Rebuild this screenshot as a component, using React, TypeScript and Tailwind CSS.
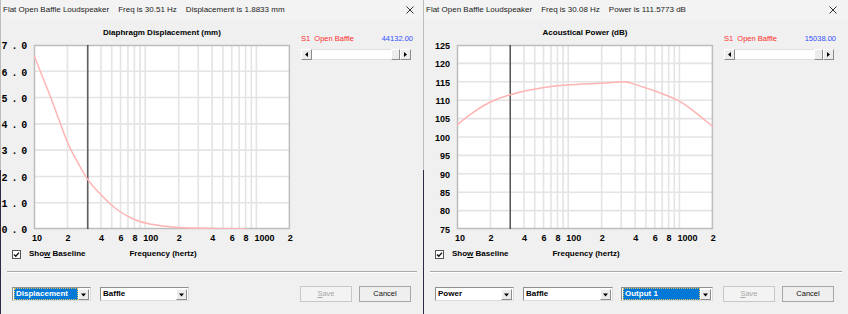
import React from "react";

const SANS = "'Liberation Sans', Arial, sans-serif";

function xf(f: number) {
  return 33 + 111.2 * Math.log10(f / 10);
}

function smoothPath(pts: [number, number][]) {
  let d = `M${pts[0][0].toFixed(2)},${pts[0][1].toFixed(2)}`;
  for (let i = 0; i < pts.length - 1; i++) {
    const p0 = pts[i - 1] || pts[i];
    const p1 = pts[i];
    const p2 = pts[i + 1];
    const p3 = pts[i + 2] || p2;
    const c1x = p1[0] + (p2[0] - p0[0]) / 6;
    const c1y = p1[1] + (p2[1] - p0[1]) / 6;
    const c2x = p2[0] - (p3[0] - p1[0]) / 6;
    const c2y = p2[1] - (p3[1] - p1[1]) / 6;
    d += ` C${c1x.toFixed(2)},${c1y.toFixed(2)} ${c2x.toFixed(2)},${c2y.toFixed(2)} ${p2[0].toFixed(2)},${p2[1].toFixed(2)}`;
  }
  return d;
}

const GRID_F = [20, 30, 40, 50, 60, 70, 80, 90, 100, 200, 300, 400, 500, 600, 700, 800, 900, 1000];
const X_LABELS: [number, string][] = [
  [10, "10"],
  [20, "2"],
  [40, "4"],
  [60, "6"],
  [80, "8"],
  [100, "100"],
  [200, "2"],
  [400, "4"],
  [600, "6"],
  [800, "8"],
  [1000, "1000"],
  [2000, "2"],
];

const TOP = 5;
const BOTTOM = 189;

type ChartProps = {
  yValues: number[];
  yMin: number;
  yMax: number;
  fmt: (v: number) => string;
  mono: boolean;
  curve: [number, number][];
  cursor: number;
};

function Chart({ yValues, yMin, yMax, fmt, mono, curve, cursor }: ChartProps) {
  const ym = (v: number) => BOTTOM - ((v - yMin) / (yMax - yMin)) * (BOTTOM - TOP);
  const pts: [number, number][] = curve.map(([f, v]) => [xf(f), ym(v)]);
  const left = xf(10);
  const right = xf(2000);
  const clipId = mono ? "clipA" : "clipB";
  return (
    <svg width={299} height={206} viewBox="0 0 299 206" className="block">
      <defs>
        <clipPath id={clipId}>
          <rect x={left} y={TOP} width={right - left} height={BOTTOM - TOP} />
        </clipPath>
      </defs>
      <rect x={left} y={TOP} width={right - left} height={BOTTOM - TOP} fill="#ffffff" />
      {yValues.slice(1, -1).map((v) => (
        <line key={"h" + v} x1={left} x2={right} y1={ym(v)} y2={ym(v)} stroke="#e4e4e4" strokeWidth={1.6} />
      ))}
      {GRID_F.map((f) => (
        <line key={"v" + f} x1={xf(f)} x2={xf(f)} y1={TOP} y2={BOTTOM} stroke="#e4e4e4" strokeWidth={1.6} />
      ))}
      <rect
        x={left + 0.5}
        y={TOP + 0.5}
        width={right - left - 1}
        height={BOTTOM - TOP - 1}
        fill="none"
        stroke="#bdbdbd"
        strokeWidth={1.5}
      />
      <line x1={xf(cursor)} x2={xf(cursor)} y1={TOP} y2={BOTTOM} stroke="#111111" strokeWidth={1} />
      <path d={smoothPath(pts)} fill="none" stroke="#ffb3b3" strokeWidth={1.5} clipPath={`url(#${clipId})`} />
      {yValues.map((v) =>
        mono ? (
          <text
            key={"yl" + v}
            x={0.5}
            y={ym(v) + 4.3}
            fontFamily="'Liberation Mono', 'Courier New', monospace"
            fontWeight={700}
            fontSize={10}
            letterSpacing={3.9}
            fill="#000"
          >
            {fmt(v)}
          </text>
        ) : (
          <text
            key={"yl" + v}
            x={26}
            y={ym(v) + 3.7}
            textAnchor="end"
            fontFamily={SANS}
            fontWeight={700}
            fontSize={9}
            fill="#000"
          >
            {fmt(v)}
          </text>
        )
      )}
      {X_LABELS.map(([f, s]) => (
        <text key={"xl" + f} x={xf(f) - 2} y={201.3} fontFamily={SANS} fontWeight={700} fontSize={9} fill="#000">
          {s}
        </text>
      ))}
    </svg>
  );
}

function Arrow({ dir }: { dir: "left" | "right" | "down" }) {
  return (
    <svg width={7} height={7} viewBox="0 0 7 7" className="block">
      {dir === "left" && <polygon points="2,3.5 5,1 5,6" fill="#000" />}
      {dir === "right" && <polygon points="5,3.5 2,1 2,6" fill="#000" />}
      {dir === "down" && <polygon points="1,2.5 6,2.5 3.5,5.5" fill="#000" />}
    </svg>
  );
}

function ScrollBtn({ dir }: { dir: "left" | "right" }) {
  return (
    <div className="flex h-[11px] w-[11px] items-center justify-center border border-t-white border-l-white border-r-[#8c8c8c] border-b-[#8c8c8c] bg-[#ececec]">
      <Arrow dir={dir} />
    </div>
  );
}

function SidePanel({ value }: { value: string }) {
  return (
    <div className="ml-[1px] flex w-[112px] flex-col">
      <div
        className="mt-[13px] flex h-[12px] items-center justify-between text-[7.5px] leading-[12px]"
        style={{ fontFamily: SANS }}
      >
        <span className="whitespace-pre text-[#ff2b2b]">S1  Open Baffle</span>
        <span className="text-[#3050ff]">{value}</span>
      </div>
      <div className="mt-[4px] flex h-[11px] w-[110px] bg-white">
        <ScrollBtn dir="left" />
        <div className="flex-1 border-y border-[#e0e0e0] bg-white" />
        <div className="h-[11px] w-[9px] border border-t-white border-l-white border-r-[#8c8c8c] border-b-[#8c8c8c] bg-[#ececec]" />
        <ScrollBtn dir="right" />
      </div>
    </div>
  );
}

function ComboArrow() {
  return (
    <div className="mr-[1px] ml-auto flex h-[11px] w-[11px] items-center justify-center border border-t-white border-l-white border-r-[#8c8c8c] border-b-[#8c8c8c] bg-[#ececec]">
      <Arrow dir="down" />
    </div>
  );
}

function Combo({
  text,
  selected,
  className,
  selClass,
}: {
  text: string;
  selected: boolean;
  className: string;
  selClass?: string;
}) {
  return (
    <div
      className={`flex h-[14px] items-center border border-[#8f8f8f] border-r-[#dcdcdc] border-b-[#dcdcdc] bg-white ${className}`}
      style={{ fontFamily: SANS }}
    >
      {selected ? (
        <div
          className={`ml-[1px] flex h-[12px] items-center border border-dotted border-[#d9c35a] bg-[#0078d7] pl-[1px] text-[8px] font-bold text-white ${selClass}`}
        >
          {text}
        </div>
      ) : (
        <div className="pl-[2px] text-[8px] font-bold text-black">{text}</div>
      )}
      <ComboArrow />
    </div>
  );
}

function Button({ label, disabled }: { label: string; disabled: boolean }) {
  return (
    <div
      className={`flex h-[16px] w-[52px] items-center justify-center border text-[7.5px] ${
        disabled ? "border-[#c8c8c8] bg-[#f3f3f3] text-[#a8a8a8]" : "border-[#a6a6a6] bg-[#efefef] text-[#111]"
      }`}
      style={{ fontFamily: SANS }}
    >
      {label === "Save" ? (
        <span>
          <span className="underline">S</span>ave
        </span>
      ) : (
        <span>{label}</span>
      )}
    </div>
  );
}

function Checkbox() {
  return (
    <div className="flex h-[9px] w-[9px] items-center justify-center border border-[#555] bg-white">
      <svg width={7} height={7} viewBox="0 0 7 7" className="block">
        <polyline points="1,3.5 2.8,5.3 6,1.6" fill="none" stroke="#111" strokeWidth={1.3} />
      </svg>
    </div>
  );
}

type WinProps = {
  titleParts: string[];
  chartTitle: string;
  chart: ChartProps;
  value: string;
  bottom: React.ReactNode;
  wide?: boolean;
};

function Window({ titleParts, chartTitle, chart, value, bottom, wide }: WinProps) {
  return (
    <div className="flex h-[314px] shrink-0">
      <div className="h-full w-[1px] bg-[linear-gradient(to_bottom,#bdbdbd_0px,#bdbdbd_170px,#2e2b47_170px,#2e2b47_100%)]" />
      <div className={`flex flex-col bg-[#f0f0f0] ${wide ? "w-[424px]" : "w-[422px]"}`}>
        <div
          className="flex h-[20px] items-center bg-[#f3f3f3] pl-[2px] text-[8px] text-[#1b1b1b]"
          style={{ fontFamily: SANS }}
        >
          <div className="flex gap-[9px]">
            {titleParts.map((t) => (
              <span key={t} className="whitespace-pre">
                {t}
              </span>
            ))}
          </div>
          <svg width={8} height={8} viewBox="0 0 8 8" className="ml-[auto] block" style={{ marginRight: wide ? 11 : 9 }}>
            <path d="M0.5,0.5 L7.5,7.5 M7.5,0.5 L0.5,7.5" stroke="#333" strokeWidth={1} />
          </svg>
        </div>
        <div className="flex">
          <div className="flex w-[299px] flex-col">
            <div
              className="ml-[33px] h-[20px] w-[256px] pt-[7px] text-center text-[8px] font-bold leading-[11px] text-black"
              style={{ fontFamily: SANS }}
            >
              {chartTitle}
            </div>
            <Chart {...chart} />
            <div className="flex h-[16px] items-center text-[8px] font-bold text-black" style={{ fontFamily: SANS }}>
              <div className="ml-[11px]">
                <Checkbox />
              </div>
              <span className="ml-[8px]">
                Sho<span className="underline">w</span> Baseline
              </span>
              <span className="ml-[44px]">Frequency (hertz)</span>
            </div>
          </div>
          <SidePanel value={value} />
        </div>
        <div className="mx-[6px] mt-[9px] h-[2px] border-t border-b border-t-[#a9a9a9] border-b-white" />
        <div className="mt-[13px] flex h-[16px] items-center">{bottom}</div>
      </div>
    </div>
  );
}

const dispCurve: [number, number][] = [
  [10, 6.6],
  [14, 5.05],
  [20, 3.3],
  [25, 2.5],
  [30.5, 1.88],
  [40, 1.3],
  [55, 0.76],
  [78, 0.38],
  [110, 0.19],
  [200, 0.06],
  [400, 0.02],
  [800, 0.01],
];

const powerCurve: [number, number][] = [
  [10, 103.3],
  [14, 106.7],
  [20, 109.5],
  [30, 111.5],
  [49, 113.0],
  [97, 114.1],
  [195, 114.6],
  [315, 115.0],
  [360, 114.7],
  [480, 113.5],
  [630, 112.3],
  [950, 110.1],
  [1250, 107.8],
  [2000, 102.8],
];

export default function App() {
  return (
    <div className="flex h-[314px] w-[848px] overflow-hidden bg-[#2e2b47]">
      <Window
        titleParts={["Flat Open Baffle Loudspeaker", "Freq is 30.51 Hz", "Displacement is 1.8833 mm"]}
        chartTitle="Diaphragm Displacement (mm)"
        value="44132.00"
        chart={{
          yValues: [0, 1, 2, 3, 4, 5, 6, 7],
          yMin: 0,
          yMax: 7,
          fmt: (v) => v.toFixed(1),
          mono: true,
          curve: dispCurve,
          cursor: 30.51,
        }}
        bottom={
          <>
            <Combo text="Displacement" selected className="ml-[11px] w-[79px]" selClass="w-[65px]" />
            <Combo text="Baffle" selected={false} className="ml-[9px] w-[89px]" />
            <div className="ml-[111px]">
              <Button label="Save" disabled />
            </div>
            <div className="ml-[7px]">
              <Button label="Cancel" disabled={false} />
            </div>
          </>
        }
      />
      <Window
        wide
        titleParts={["Flat Open Baffle Loudspeaker", "Freq is 30.08 Hz", "Power is 111.5773 dB"]}
        chartTitle="Acoustical Power (dB)"
        value="15038.00"
        chart={{
          yValues: [75, 80, 85, 90, 95, 100, 105, 110, 115, 120, 125],
          yMin: 75,
          yMax: 125,
          fmt: (v) => String(v),
          mono: false,
          curve: powerCurve,
          cursor: 30.08,
        }}
        bottom={
          <>
            <Combo text="Power" selected={false} className="ml-[11px] w-[79px]" />
            <Combo text="Baffle" selected={false} className="ml-[9px] w-[90px]" />
            <Combo text="Output 1" selected className="ml-[8px] w-[92px]" selClass="w-[79px]" />
            <div className="ml-[10px]">
              <Button label="Save" disabled />
            </div>
            <div className="ml-[7px]">
              <Button label="Cancel" disabled={false} />
            </div>
          </>
        }
      />
    </div>
  );
}
